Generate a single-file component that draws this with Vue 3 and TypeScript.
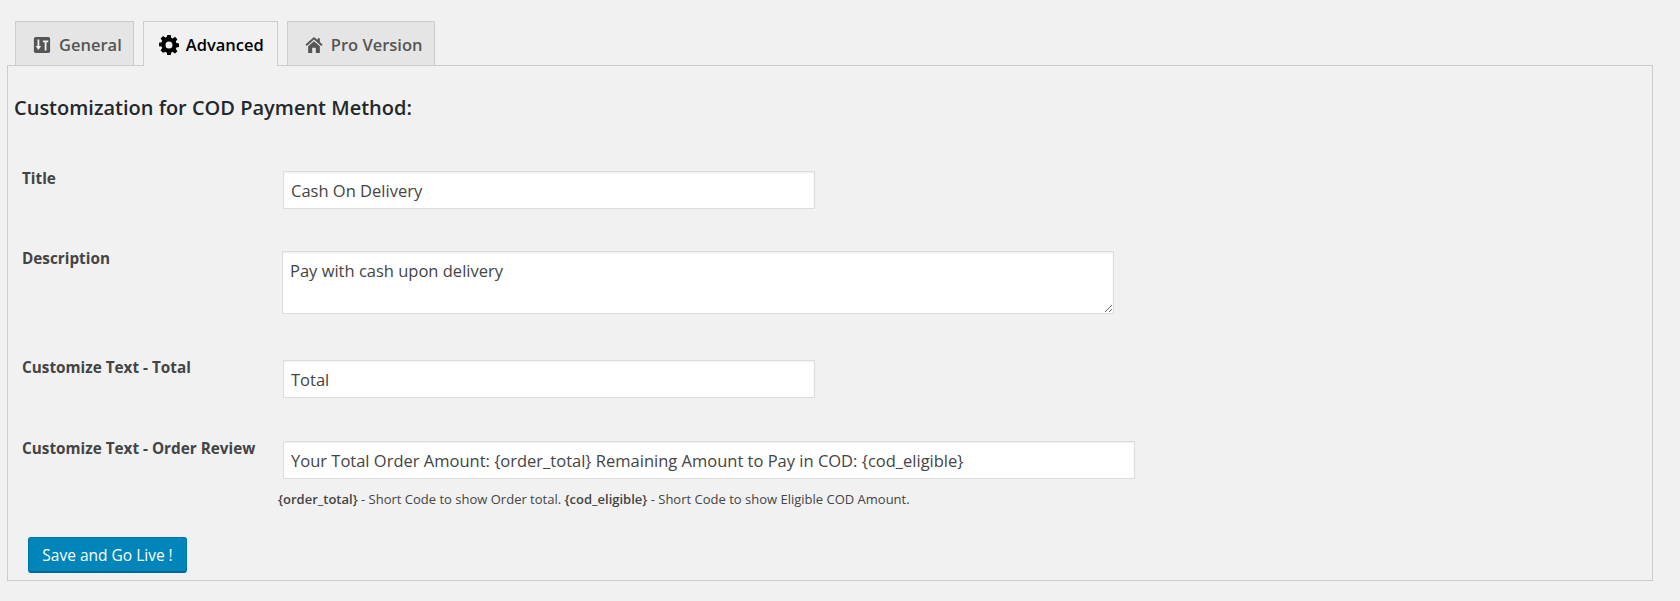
<script setup lang="ts">
import { ref } from 'vue'

const title = ref('Cash On Delivery')
const description = ref('Pay with cash upon delivery')
const total = ref('Total')
const review = ref('Your Total Order Amount: {order_total} Remaining Amount to Pay in COD: {cod_eligible}')
</script>

<template>
  <div class="page">
    <nav class="tabs">
      <a class="tab">
        <svg class="icon" viewBox="0 0 20 20">
          <rect x="1" y="1" width="18" height="18" rx="2" fill="#555" />
          <path d="M6 4v9M11 6h6M14 6v10" fill="none" stroke="#f1f1f1" stroke-width="2" />
          <path d="M3 11h6l-3 4.500z" fill="#f1f1f1" />
        </svg>
        General
      </a>
      <a class="tab active">
        <svg class="icon gear" viewBox="0 0 20 20"><path fill="#000" fill-rule="evenodd" d="M8.300 0h3.400l.5 2.800 1.500.6 2.300-1.600 2.400 2.400-1.600 2.300.6 1.500 2.800.5v3.400l-2.800.5-.6 1.500 1.600 2.300-2.400 2.400-2.300-1.600-1.500.6-.5 2.800H8.300l-.5-2.800-1.500-.6L4 17.800l-2.400-2.400 1.600-2.300-.6-1.500-2.800-.5V7.700l2.800-.5.6-1.500L1.600 3.400 4 1l2.300 1.600 1.500-.6zM10 6.500a3.500 3.500 0 1 0 0 7 3.500 3.500 0 0 0 0-7z"/></svg>
        Advanced
      </a>
      <a class="tab">
        <svg class="icon" viewBox="0 0 20 20">
          <path fill="#555" d="M10 1 .5 9.500 2 11l8-7 8 7 1.500-1.500L16.500 6.800V2.500h-2.500v2z" />
          <path fill="#555" fill-rule="evenodd" d="M10 5.800 3.500 11.500V19h13v-7.500zM8 13h4v6H8z" />
        </svg>
        Pro Version
      </a>
    </nav>

    <section class="panel">
      <h2 class="heading">Customization for COD Payment Method:</h2>

      <div class="row row-title">
        <label class="label">Title</label>
        <input v-model="title" class="field short" type="text" />
      </div>
      <div class="row row-desc">
        <label class="label">Description</label>
        <textarea v-model="description" class="field area"></textarea>
      </div>
      <div class="row row-total">
        <label class="label">Customize Text - Total</label>
        <input v-model="total" class="field short" type="text" />
      </div>
      <div class="row row-review">
        <label class="label">Customize Text - Order Review</label>
        <input v-model="review" class="field long" type="text" />
      </div>
      <p class="hint"><b>{order_total}</b> - Short Code to show Order total. <b>{cod_eligible}</b> - Short Code to show Eligible COD Amount.</p>

      <button class="save" type="button">Save and Go Live !</button>
    </section>
  </div>
</template>

<style>
html, body { margin: 0; background: #f1f1f1; }
</style>

<style scoped>
.page {
  box-sizing: border-box;
  width: 1680px;
  height: 601px;
  padding: 21px 27px 0 7px;
  background: #f1f1f1;
  font-family: "Open Sans", sans-serif;
  color: #444;
  overflow: hidden;
}
.tabs { display: flex; gap: 9px; padding-left: 8px; height: 45px; position: relative; z-index: 1; }
.tab {
  box-sizing: border-box;
  height: 44px;
  display: flex;
  align-items: center;
  gap: 8px;
  padding: 2px 11px 0 17px;
  border: 1px solid #ccc;
  border-bottom: none;
  background: #e5e5e5;
  font-size: 16.500px;
  font-weight: 600;
  color: #555;
}
.tab.active { height: 45px; padding-top: 1px; padding-right: 13px; background: #f1f1f1; color: #000; }
.icon { width: 18px; height: 18px; flex: none; }
.gear { width: 20px; height: 20px; margin: 0 -1px 0 -2px; }
.panel {
  box-sizing: border-box;
  height: 516px;
  margin-top: -1px;
  border: 1px solid #ccc;
  padding: 29px 0 0 6px;
}
.heading {
  margin: 0;
  font-size: 20px;
  line-height: 25px;
  font-weight: 600;
  color: #23282d;
}
.row { display: flex; align-items: flex-start; }
.label {
  box-sizing: border-box;
  width: 269px;
  margin-top: -3px;
  padding-left: 8px;
  font-size: 15.300px;
  line-height: 20px;
  font-weight: 700;
  color: #444;
}
.field {
  box-sizing: border-box;
  margin: 0;
  background: #fff;
  border: 1px solid #ddd;
  box-shadow: inset 0 1px 2px rgba(0, 0, 0, 0.07);
  font-family: "Open Sans", sans-serif;
  font-size: 16.500px;
  color: #444;
  padding: 0 7px;
  outline: none;
}
.short { width: 532px; height: 38px; }
.long { width: 852px; height: 38px; }
.area { width: 832px; height: 63px; margin-left: -1px; padding: 7px 7px; line-height: 24px; }
.row-title { margin-top: 51px; }
.row-desc { margin-top: 42px; }
.row-total { margin-top: 46px; }
.row-review { margin-top: 43px; }
.hint {
  margin: 11px 0 0 264px;
  font-size: 13px;
  line-height: 18px;
  color: #444;
}
.hint b { font-weight: 600; }
.save {
  display: block;
  box-sizing: border-box;
  width: 159px;
  height: 36px;
  margin: 29px 0 0 14px;
  padding: 0;
  background: #0085ba;
  border: 1px solid #0073aa;
  border-bottom: 2px solid #006799;
  border-radius: 3px;
  font-family: "Open Sans", sans-serif;
  font-size: 15.500px;
  color: #fff;
}
</style>
